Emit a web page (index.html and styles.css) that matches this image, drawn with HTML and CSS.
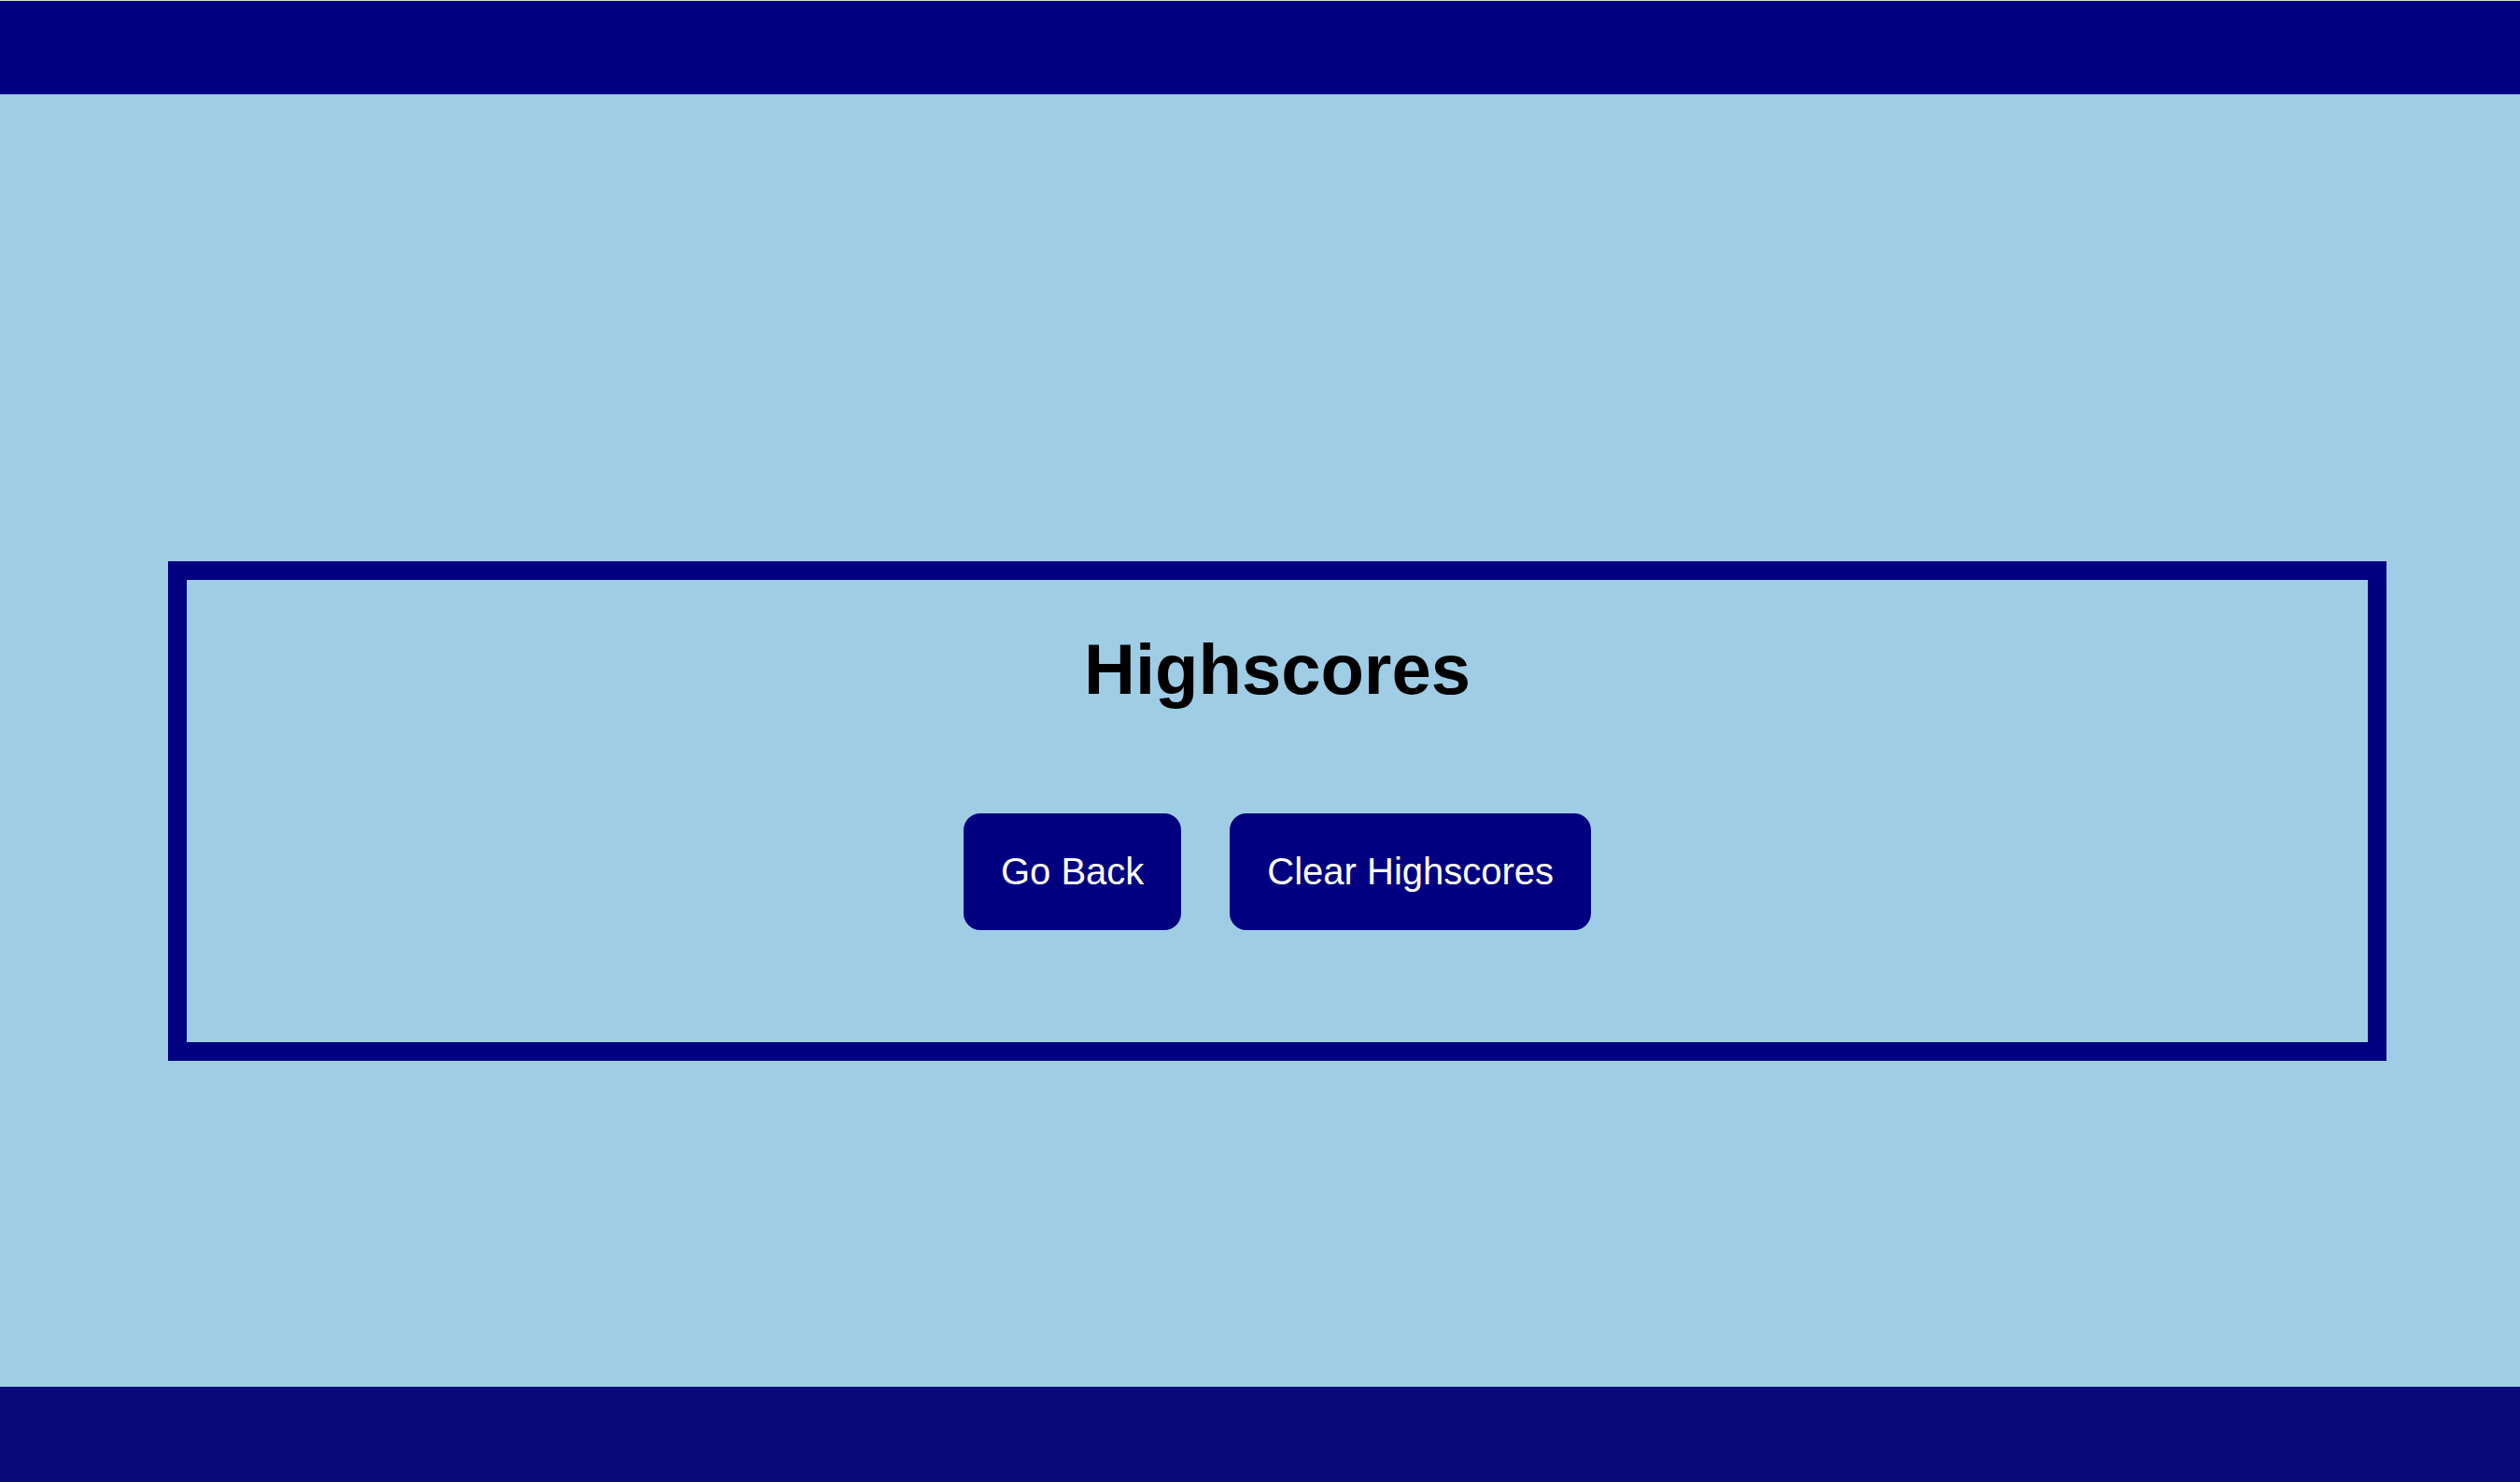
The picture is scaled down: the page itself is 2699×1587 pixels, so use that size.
FILE: index.html
```html
<!DOCTYPE html>
<html lang="en">
<head>
<meta charset="utf-8">
<title>Highscores</title>
<link rel="stylesheet" href="styles.css">
</head>
<body>
<div class="topline"></div>
<header class="header"></header>
<main class="main">
  <section class="card">
    <h1 class="title">Highscores</h1>
    <div class="actions">
      <button class="btn">Go Back</button>
      <button class="btn">Clear Highscores</button>
    </div>
  </section>
</main>
<footer class="footer"></footer>
</body>
</html>
```

FILE: styles.css
```css
html, body {
  margin: 0;
  padding: 0;
}
body {
  background: #9fcde5;
  font-family: "Liberation Sans", Arial, sans-serif;
  min-height: 100vh;
  display: flex;
  flex-direction: column;
}
.topline {
  height: 1px;
  background: #dcdcdc;
}
.header {
  height: 100px;
  background: #000080;
}
.main {
  flex: 1;
  display: flex;
  flex-direction: column;
}
.card {
  margin: 500px 0 0 180px;
  width: 2376px;
  height: 535px;
  box-sizing: border-box;
  border: 20px solid #000080;
  display: flex;
  flex-direction: column;
  align-items: center;
}
.title {
  margin: 52px 0 0;
  font-size: 76px;
  font-weight: bold;
  color: #000;
  line-height: 87px;
}
.actions {
  margin-top: 111px;
  display: flex;
  gap: 52px;
}
.btn {
  font-family: "Liberation Sans", Arial, sans-serif;
  font-size: 40px;
  line-height: 46px;
  color: #fff;
  background: #000080;
  border: none;
  border-radius: 18px;
  padding: 39px 40px 40px;
}
.footer {
  height: 102px;
  background: #0b0a7a;
}
```
